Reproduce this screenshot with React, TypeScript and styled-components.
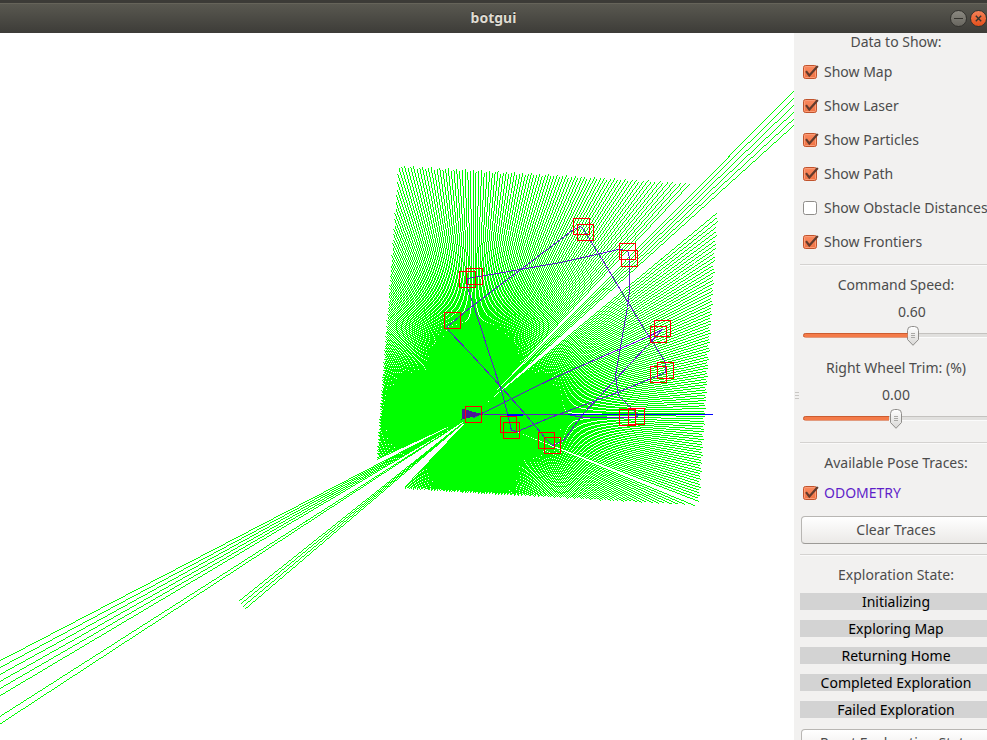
import React, { useId, useState } from 'react';
import styled, { createGlobalStyle } from 'styled-components';

const GlobalStyle = createGlobalStyle`
  *, *::before, *::after { box-sizing: border-box; }
  body {
    margin: 0;
    overflow: hidden;
    background: #fff;
    color: #4c4c4c;
    font: 14px/18px "Noto Sans", "Open Sans", sans-serif;
  }
`;

const svgUrl = (svg: string) => `url("data:image/svg+xml,${encodeURIComponent(svg)}")`;

const uncheckedBox = svgUrl(
  `<svg xmlns="http://www.w3.org/2000/svg" width="16" height="16"><rect x=".5" y="1.5" width="13" height="13" rx="2" fill="#fff" stroke="#8f8d8a"/></svg>`,
);
const checkedBox = svgUrl(
  `<svg xmlns="http://www.w3.org/2000/svg" width="16" height="16"><defs><linearGradient id="g" x2="0" y2="1"><stop stop-color="#fa8a60"/><stop offset="1" stop-color="#ef7242"/></linearGradient></defs><rect x=".5" y="1.5" width="13" height="13" rx="2" fill="url(#g)" stroke="#c0532c"/><rect x="1.5" y="2.5" width="11" height="11" rx="1" fill="none" stroke="#fb9d78"/><path d="M3 7.2 6.3 11.5 14.8 2" fill="none" stroke="#633b2d" stroke-width="2.2"/></svg>`,
);
const sliderThumb = svgUrl(
  `<svg xmlns="http://www.w3.org/2000/svg" width="12" height="20"><defs><linearGradient id="g" x2="0" y2="1"><stop stop-color="#fff"/><stop offset="1" stop-color="#d8d7d5"/></linearGradient></defs><path d="M.5 4.5Q.5 .5 4.500 .5H7.500Q11.500 .5 11.500 4.500V13.500L6 19.300.5 13.500Z" fill="url(#g)" stroke="#8f8d8a"/><path d="M4 7.500H8M4 9.500H8M4 11.500H8" stroke="#aaa9a6"/></svg>`,
);

const Window = styled.div`
  display: flex;
  flex-direction: column;
  height: 100vh;
`;

const TitleBar = styled.header`
  display: grid;
  grid-template-columns: 1fr auto 1fr;
  align-items: center;
  flex: none;
  height: 33px;
  padding-top: 3px;
  background: linear-gradient(#3c3b37 0 3px, #66645a 3px 4px, #595850 4px, #3d3c38 100%);
`;

const Title = styled.h1`
  grid-column: 2;
  margin: 0;
  color: #dfdbd2;
  font-size: 14px;
  line-height: 18px;
  text-shadow: 0 -1px 1px #2b2a27;
`;

const WindowControls = styled.div`
  display: flex;
  justify-content: flex-end;
  gap: 3px;
`;

const ControlButton = styled.button<{ $close?: boolean }>`
  display: grid;
  place-items: center;
  width: 17px;
  height: 17px;
  padding: 0;
  border: 1px solid #33322e;
  border-radius: 50%;
  color: #35342f;
  background: ${(p) => (p.$close ? 'linear-gradient(#f58157, #e4501c)' : 'linear-gradient(#8b8981, #68665f)')};
`;

const Body = styled.div`
  display: flex;
  flex: 1;
  min-height: 0;
`;

const MapView = styled.main`
  flex: 1;
  min-width: 0;
  background: #fff;

  svg { display: block; width: 100%; height: 100%; }
`;

const Sidebar = styled.aside`
  display: flex;
  flex: none;
  width: 193px;
  overflow: hidden;
  background: #f2f1f0;
`;

const Splitter = styled.div`
  display: flex;
  flex-direction: column;
  justify-content: center;
  align-items: center;
  gap: 2px;
  flex: none;
  width: 6px;
  padding-top: 18px;

  i { width: 4px; height: 1px; background: #c9c7c4; }
`;

const Panel = styled.div`
  display: flex;
  flex-direction: column;
  flex: none;
  width: 192px;
`;

const Heading = styled.h2`
  margin: 0;
  font-size: 14px;
  font-weight: 400;
  line-height: 18px;
  text-align: center;
`;

const Section = styled.section`
  flex: none;
  padding-top: 10px;
`;

const Divider = styled.hr`
  flex: none;
  width: 100%;
  height: 2px;
  margin: 0;
  border: 0;
  border-top: 1px solid #d4d2d0;
  background: #faf9f9;
`;

const CheckList = styled.div`
  padding: 4px 0 5px;
`;

const CheckRow = styled.label<{ $tone?: string }>`
  display: flex;
  align-items: center;
  gap: 5px;
  height: 34px;
  padding-left: 3px;
  color: ${(p) => p.$tone ?? 'inherit'};
  white-space: nowrap;
`;

const CheckInput = styled.input`
  appearance: none;
  flex: none;
  width: 16px;
  height: 16px;
  margin: 0;
  background: ${uncheckedBox};

  &:checked { background: ${checkedBox}; }
`;

const SliderBlock = styled.div`
  padding: 0 3px 14px;
`;

const SliderLabel = styled.label`
  display: block;
  text-align: center;
`;

const SliderValue = styled.div`
  display: grid;
  padding: 9px 0 4px;

  output { grid-column: 2; }
`;

const Range = styled.input`
  appearance: none;
  display: block;
  width: 100%;
  height: 20px;
  margin: 0;
  background: transparent;

  &::-webkit-slider-runnable-track {
    height: 5px;
    border-radius: 2px;
    background: linear-gradient(#c4c2bf 0 1px, #e1e0de 1px 4px, #fbfbfb 4px);
  }
  &::-webkit-slider-thumb {
    appearance: none;
    width: 12px;
    height: 20px;
    margin-top: -7px;
    background: ${sliderThumb};
  }
`;

const RangeTrack = styled.div`
  display: grid;
  align-items: center;

  > * { grid-area: 1 / 1; }
`;

const RangeFill = styled.div`
  height: 5px;
  border: 1px solid #cc5c30;
  border-radius: 3px;
  background: #f47b49;
  pointer-events: none;
  clip-path: inset(0 7px 0 0);
`;

const PushButton = styled.button`
  display: block;
  width: 190px;
  height: 28px;
  margin: 0 1px;
  padding: 0;
  border: 1px solid #b8b6b3;
  border-bottom-color: #9c9a97;
  border-radius: 4px;
  background: linear-gradient(#fff, #ebe9e7);
  color: inherit;
  font: inherit;
`;

const TraceBody = styled.div`
  display: grid;
  gap: 6px;
  padding: 4px 0 10px;
`;

const StateList = styled.ul`
  display: grid;
  gap: 10px;
  margin: 0;
  padding: 9px 0 11px;
  list-style: none;
`;

const StateItem = styled.li`
  height: 17px;
  background: #d3d3d3;
  color: #000;
  line-height: 17px;
  text-align: center;
`;

const TITLE_HEIGHT = 33;
const ORIGIN = { x: 473, y: 414 };
const STEP = 0.6455;

const ROOM: [number, number][] = [[398, 166], [719, 185], [698, 505], [375, 486]];

/** Distance from the sensor to the room outline in direction (dx, dy). */
function wallDistance(dx: number, dy: number) {
  let best = Infinity;
  ROOM.forEach(([x1, y1], i) => {
    const [x2, y2] = ROOM[(i + 1) % ROOM.length];
    const ex = x2 - x1;
    const ey = y2 - y1;
    const det = dx * ey - dy * ex;
    if (!det) return;
    const t = ((x1 - ORIGIN.x) * ey - (y1 - ORIGIN.y) * ex) / det;
    const u = ((x1 - ORIGIN.x) * dy - (y1 - ORIGIN.y) * dx) / det;
    if (t > 0 && u >= 0 && u <= 1) best = Math.min(best, t);
  });
  return best;
}

type Beam = { angle: number; range?: number };

const series = (start: number, count: number, range?: number): Beam[] =>
  Array.from({ length: count }, (_, i) => ({ angle: start + i * STEP, range }));

const BEAMS: Beam[] = [
  ...series(42.05, 6, 900),
  ...series(46.8, 246),
  ...series(207.48, 6, 900),
  ...series(212.53, 2, 900),
  ...series(218.5, 4, 300),
  ...series(226.6, 269).filter((_, i) => i !== 173),
];

/** A beam one pixel thick along its minor axis. */
function LaserBeam({ angle, range, index }: Beam & { index: number }) {
  const a = (angle * Math.PI) / 180;
  const dx = Math.cos(a);
  const dy = -Math.sin(a);
  const length = range ?? wallDistance(dx, dy) + ((index * 2) % 3) - 1;
  const { x, y } = ORIGIN;
  const flat = Math.abs(dx) > Math.abs(dy);
  const ox = flat ? 0 : 0.5;
  const oy = flat ? 0.5 : 0;
  const ex = x + dx * length;
  const ey = y + dy * length;
  return (
    <polygon
      points={`${x - ox},${y - oy} ${ex - ox},${ey - oy} ${ex + ox},${ey + oy} ${x + ox},${y + oy}`}
    />
  );
}

const FRONTIERS = [
  [459, 271], [466, 268], [444, 312], [573, 218], [577, 224], [619, 243],
  [621, 250], [654, 320], [650, 326], [465, 406], [500, 416], [503, 422],
  [538, 432], [544, 437], [657, 362], [650, 366], [619, 409], [628, 408],
];

const TRACE =
  'M473 417 550 379 650 335 662 329 583 413 563 440 552 445 545 438 526 415 502 388 470 353 448 330 ' +
  '447 326 470 307 560 239 573 229 580 226 583 229 598 253 644 329 650 338 665 362 665 372 617 392 ' +
  '550 417 517 431 511 430 503 397 478 320 467 287 467 278 485 275 560 262 618 249 627 250 629 257 ' +
  '629 290 627 307 623 329 615 375 618 395 635 412 637 415 636 417 583 417 567 414 483 414';

function LaserMap() {
  return (
    <svg role="img" aria-label="Laser scan map" shapeRendering="crispEdges" fill="none">
      <g transform={`translate(0.5 ${0.5 - TITLE_HEIGHT})`}>
        <g fill="#00ff00">
          {BEAMS.map((beam, i) => (
            <LaserBeam key={i} index={i} {...beam} />
          ))}
        </g>
        <path d={TRACE} stroke="#5a20c8" />
        <path d="M506 414H522M567 414H712" stroke="#0000ff" />
        <path d="M506 415H522" stroke="#0000ff" />
        <path d="M461 408V419L483 414Z" fill="#4b1a96" />
        <g stroke="#ff0000">
          {FRONTIERS.map(([x, y]) => (
            <rect key={`${x}-${y}`} x={x} y={y} width="16" height="16" />
          ))}
        </g>
      </g>
    </svg>
  );
}

function Check({ label, checked = true, tone }: { label: string; checked?: boolean; tone?: string }) {
  return (
    <CheckRow $tone={tone}>
      <CheckInput type="checkbox" defaultChecked={checked} />
      {label}
    </CheckRow>
  );
}

function Slider({ label, min, max, initial }: { label: string; min: number; max: number; initial: number }) {
  const id = useId();
  const [value, setValue] = useState(initial);
  const share = (value - min) / (max - min);
  return (
    <SliderBlock>
      <SliderLabel htmlFor={id}>{label}</SliderLabel>
      <SliderValue style={{ gridTemplateColumns: `${share * 100}fr auto ${(1 - share) * 100}fr` }}>
        <output htmlFor={id}>{value.toFixed(2)}</output>
      </SliderValue>
      <RangeTrack>
        <Range
          id={id}
          type="range"
          min={min}
          max={max}
          step={0.01}
          value={value}
          onChange={(e: React.ChangeEvent<HTMLInputElement>) => setValue(Number(e.target.value))}
        />
        <RangeFill style={{ width: `${share * 100}%` }} />
      </RangeTrack>
    </SliderBlock>
  );
}

const LAYERS = [
  { label: 'Show Map' },
  { label: 'Show Laser' },
  { label: 'Show Particles' },
  { label: 'Show Path' },
  { label: 'Show Obstacle Distances', checked: false },
  { label: 'Show Frontiers' },
];

const STATES = ['Initializing', 'Exploring Map', 'Returning Home', 'Completed Exploration', 'Failed Exploration'];

export default function App() {
  return (
    <Window>
      <GlobalStyle />
      <TitleBar>
        <Title>botgui</Title>
        <WindowControls>
          <ControlButton type="button" aria-label="Minimize">
            <svg width="9" height="9" stroke="currentColor"><path d="M0 4.500H9" /></svg>
          </ControlButton>
          <ControlButton type="button" aria-label="Close" $close>
            <svg width="7" height="7" stroke="currentColor" strokeWidth="1.4"><path d="M.8.8 6.200 6.200M6.200.8.8 6.200" /></svg>
          </ControlButton>
        </WindowControls>
      </TitleBar>
      <Body>
        <MapView>
          <LaserMap />
        </MapView>
        <Sidebar>
          <Splitter><i /><i /><i /></Splitter>
          <Panel>
            <Heading>Data to Show:</Heading>
            <CheckList>
              {LAYERS.map((layer) => (
                <Check key={layer.label} {...layer} />
              ))}
            </CheckList>
            <Divider />
            <Section>
              <Slider label="Command Speed:" min={0} max={1} initial={0.6} />
              <Slider label="Right Wheel Trim: (%)" min={-1} max={1} initial={0} />
            </Section>
            <Divider />
            <Section>
              <Heading>Available Pose Traces:</Heading>
              <TraceBody>
                <Check label="ODOMETRY" tone="#5f1fc9" />
                <PushButton type="button">Clear Traces</PushButton>
              </TraceBody>
            </Section>
            <Divider />
            <Section>
              <Heading>Exploration State:</Heading>
              <StateList>
                {STATES.map((state) => (
                  <StateItem key={state}>{state}</StateItem>
                ))}
              </StateList>
              <PushButton type="button">Reset Exploration State</PushButton>
            </Section>
          </Panel>
        </Sidebar>
      </Body>
    </Window>
  );
}
